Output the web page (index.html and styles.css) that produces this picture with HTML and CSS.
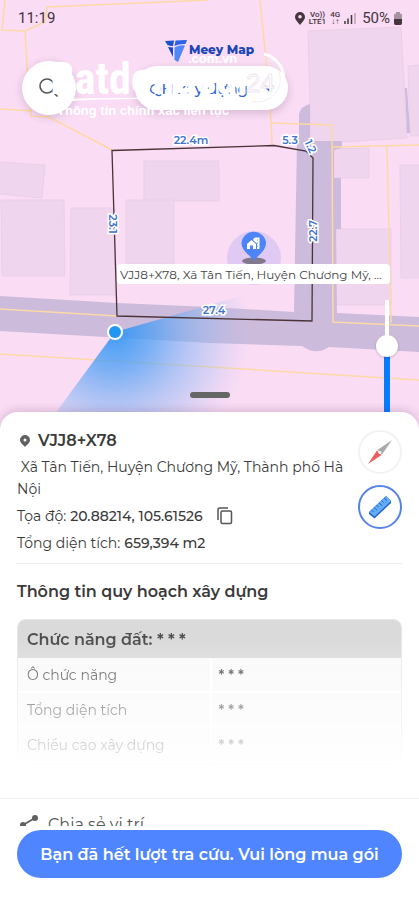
FILE: index.html
```
<!DOCTYPE html>
<html lang="vi">

<head>
    <meta charset="UTF-8" />
    <meta name="viewport" content="width=device-width, initial-scale=1" />
    <title>Meey Map</title>
    <link rel="stylesheet" href="styles.css">
</head>

<body>
    <section class="map">
        <svg class="map-canvas" viewBox="0 0 419 430" preserveAspectRatio="xMidYMin slice">
            <defs>
                <radialGradient id="beam" gradientUnits="userSpaceOnUse" cx="115" cy="332" r="135">
                    <stop offset="0" stop-color="#2b93f5" stop-opacity="0.9" />
                    <stop offset="0.3" stop-color="#4a9ff5" stop-opacity="0.7" />
                    <stop offset="0.65" stop-color="#7db4f5" stop-opacity="0.4" />
                    <stop offset="1" stop-color="#9dbef5" stop-opacity="0" />
                </radialGradient>
            </defs>
            <rect width="419" height="430" fill="#fadcf4" />

            <!-- buildings -->
            <g fill="#f0d5ee" stroke="#ebcfe9">
                <path d="M308 31L401 27L407 138L342 142H311Z" />
                <path d="M408 66L420 65V136H410Z" />
                <path d="M-1 162L45 165L42 198L-1 194Z" />
                <path d="M1 200H64L65 276H2Z" />
                <path d="M71 208H115V295H70Z" />
                <path d="M144 161H219V201H144Z" />
                <path d="M126 200H174V264H126Z" />
                <path d="M334 149L369 148V178H334Z" />
                <path d="M400 165H420V278H401Z" />
                <path d="M336 229H391V305H336Z" />
            </g>

            <!-- roads -->
            <g fill="#cdbbdb">
                <path d="M0 296L117 303L210 307L294 312L297 141H299V114Q301 106 310 104V141H342V148L334 150V178H341V229H336L337 313L419 317V352L329 347Q316 356 302 346L210 343L0 331Z" />
                <path d="M405 88H407L410 133H407Z" />
            </g>

            <g fill="none" stroke="#fcd9a6" stroke-width="1.5">
                <path d="M5 0L2 30L25 31L29 100L31 116L49 117L112 150" />
                <path d="M0 109L32 111M25 31L45 22L47 7L209 0" />
                <path d="M260 0L266 60L271 120L272 145" />
                <path d="M271 123L332 125L333 322L419 326" />
                <path d="M332 147L419 145M387 145L391 323" />
                <path d="M0 309L117 316M0 354L210 367L419 380" />
            </g>

            <path d="M115 332L290 282V430H43Z" fill="url(#beam)" />
            <path d="M112 150.500L274 145.500L306 151L313 158L312 321L117 316Z" fill="none" stroke="#4a3337" stroke-width="1.300" />

            <g class="edge-label">
                <text x="191" y="144">22.4m</text>
                <text x="290" y="144">5.3</text>
                <text transform="translate(307 148) rotate(65)">1.2</text>
                <text transform="translate(109 224) rotate(90)">23.1</text>
                <text transform="translate(317 231) rotate(-90)">22.7</text>
                <text x="214" y="314">27.4</text>
            </g>

            <circle cx="115" cy="332" r="8" fill="#fff" />
            <circle cx="115" cy="332" r="6" fill="#2196f3" />

            <!-- place marker -->
            <circle cx="254" cy="258" r="27" fill="#b9b0f5" fill-opacity="0.4" />
            <ellipse cx="254" cy="261" rx="12" ry="3.500" fill="#82788c" />
            <path d="M254 261C251 256 241.500 251 241.500 243A12.300 12.300 0 0 1 266 243C266 251 257 256 254 261Z" fill="#4d85f8" />
            <path d="M247 244L251.500 240L256 244V249H253V245.500H250V249H247ZM253 239.500L255 237.500H259.500V249H257V243.500L253 240Z" fill="#fff" />
            <path d="M257 240H258M257 243H258M257 246H258" stroke="#4d85f8" stroke-width="0.800" />
            <rect x="117" y="264" width="273" height="20" rx="4" fill="#fff" />
            <text class="place-label" x="120" y="279">VJJ8+X78, Xã Tân Tiến, Huyện Chương Mỹ, ...</text>
        </svg>

        <div class="status-bar">
            <time>11:19</time>
            <div class="status-icons">
                <svg width="10" height="13" viewBox="0 0 10 13"><path d="M5 0a5 5 0 0 0-5 5c0 3 3 5 5 8 2-3 5-5 5-8a5 5 0 0 0-5-5zm0 3a1.800 1.800 0 1 1 0 3.600a1.800 1.800 0 0 1 0-3.600z" fill="#44353f" fill-rule="evenodd" /></svg>
                <span class="network">Vo))<br>LTE1</span>
                <span class="network">4G<br>↓↑</span>
                <svg width="12" height="12" viewBox="0 0 12 12"><path d="M1 12V9M4 12V6.500M7.500 12V3" stroke="#44353f" stroke-width="1.500" /><path d="M11 12V1" stroke="#b9a4b5" stroke-width="1.500" /></svg>
                <span class="battery-level">50%</span>
                <svg width="8" height="13" viewBox="0 0 8 13"><path d="M0 3Q0 1.500 1.500 1.500H2V0H6V1.500H6.500Q8 1.500 8 3V7H0Z" fill="#a593a0" /><path d="M0 7H8V11Q8 13 6.500 13H1.500Q0 13 0 11Z" fill="#44353f" /></svg>
            </div>
        </div>

        <div class="brand">
            <svg width="22" height="23" viewBox="0 0 22 23">
                <path d="M0 1L9 .5L8 6Q4 6 2.500 5Z" fill="#1a4fd0" />
                <path d="M10.500 .5L22 0L20.500 4Q15 3.500 9.500 6Z" fill="#2a62e8" />
                <path d="M3 7L8 7.500V17Z" fill="#1546c4" />
                <path d="M9.500 7.500Q15 4.500 20 5.500L13 22L9.500 20Z" fill="#4f88fb" />
            </svg>
            <span>Meey Map</span>
        </div>

        <div class="search-row">
            <button class="search-button" type="button" aria-label="Tìm kiếm">
                <svg width="20" height="20" viewBox="0 0 20 20" fill="none" stroke="#555" stroke-width="1.600"><circle cx="8" cy="8" r="7" /><path d="M13 13L18.500 18.500" /></svg>
            </button>
            <label class="layer-picker">
                <select aria-label="Lớp quy hoạch">
                    <option>QH xây dựng</option>
                </select>
                <svg width="10" height="7" viewBox="0 0 10 7" fill="none" stroke="#2f66d5" stroke-width="2"><path d="M1 1L5 5L9 1" /></svg>
            </label>
        </div>

        <!-- watermark over the search row -->
        <svg class="watermark" width="240" height="74" viewBox="0 0 240 74" fill="#fff">
            <text class="wm-name" x="0" y="44">Batdongsan</text>
            <text class="wm-number" x="196" y="42">24</text>
            <text class="wm-domain" x="138" y="13">.com.vn</text>
            <text class="wm-slogan" x="7" y="65">Thông tin chính xác liên tục</text>
            <path d="M2 50Q60 46 162 49Q60 48 2 52Z" />
            <path d="M214 4A24 24 0 1 1 202 54" fill="none" stroke="#fff" stroke-width="3" />
            <path d="M214 8A21 21 0 1 1 202 51" fill="none" stroke="#f1e8f1" stroke-width="0.800" />
        </svg>

        <input class="opacity-slider" type="range" min="0" max="100" value="70" aria-label="Độ mờ lớp bản đồ">
        <div class="drag-handle"></div>
    </section>

    <main class="sheet">
        <div class="sheet-scroll">
            <section class="place">
                <div class="place-info">
                    <h1>
                        <svg width="10" height="12" viewBox="0 0 10 12"><path d="M5 0a5 5 0 0 0-5 5c0 3 3 4.500 5 7 2-2.500 5-4 5-7a5 5 0 0 0-5-5zm0 3.500a1.500 1.500 0 1 1 0 3a1.500 1.500 0 0 1 0-3z" fill="#616161" fill-rule="evenodd" /></svg>
                        VJJ8+X78
                    </h1>
                    <p class="address">&nbsp;Xã Tân Tiến, Huyện Chương Mỹ, Thành phố Hà Nội</p>
                    <p class="fact">Tọa độ: <b>20.88214, 105.61526</b>
                        <button class="copy-button" type="button" aria-label="Sao chép tọa độ">
                            <svg width="16" height="18" viewBox="0 0 16 18" fill="none" stroke="#555" stroke-width="1.500"><rect x="4" y="4" width="10.500" height="12.500" rx="1.500" /><path d="M1 13V2.500Q1 1 2.500 1H11" /></svg>
                        </button>
                    </p>
                    <p class="fact">Tổng diện tích: <b>659,394 m2</b></p>
                </div>
                <div class="tools">
                    <button class="tool" type="button" aria-label="La bàn">
                        <svg width="26" height="26" viewBox="0 0 26 26"><path d="M25 1L10.500 11L15 15.500Z" fill="#aaa" /><path d="M1 25L10 11.500L14.500 16Z" fill="#f45b5b" /><circle cx="12.800" cy="13.400" r="1.500" fill="#fff" /></svg>
                    </button>
                    <button class="tool active" type="button" aria-label="Đo đạc">
                        <svg width="24" height="24" viewBox="0 0 24 24"><path d="M1 17L18 1L23 6V8L6.500 23.500L1 19Z" fill="#1d62cf" /><path d="M1 17L18 1L23 6L6.500 21.500Z" fill="#64acf5" /><path d="M3.500 15L5.500 17M6 12.500L9 15M8.500 10L10.500 12M11 8L14 10.500M13.500 5.500L15.500 7.500M16 3L19 5.500" stroke="#1d62cf" /></svg>
                    </button>
                </div>
            </section>

            <section class="planning">
                <h2>Thông tin quy hoạch xây dựng</h2>
                <table>
                    <thead>
                        <tr><th colspan="2">Chức năng đất: * * *</th></tr>
                    </thead>
                    <tbody>
                        <tr><td>Ô chức năng</td><td>* * *</td></tr>
                        <tr><td>Tổng diện tích</td><td>* * *</td></tr>
                        <tr><td>Chiều cao xây dựng</td><td>* * *</td></tr>
                    </tbody>
                </table>
            </section>

            <a class="share" href="#">
                <svg width="18" height="20" viewBox="0 0 18 20" fill="#616161"><path d="M15 3L3 10L15 17" fill="none" stroke="#616161" stroke-width="1.800" /><circle cx="15" cy="3" r="3" /><circle cx="3" cy="10" r="3" /><circle cx="15" cy="17" r="3" /></svg>
                Chia sẻ vị trí
            </a>
        </div>

        <footer>
            <button class="buy-button" type="button">Bạn đã hết lượt tra cứu. Vui lòng mua gói</button>
        </footer>
    </main>
</body>

</html>
```
FILE: styles.css
```
body {
    display: flex;
    flex-direction: column;
    height: 100vh;
    margin: 0;
    font-family: Montserrat, Inter, "Open Sans", sans-serif;
    font-size: 15px;
    color: #3a3a3a;
    background: #fff;
}

button {
    font: inherit;
    border: none;
    padding: 0;
    cursor: pointer;
}

svg {
    flex: none;
}

h1,
h2,
p {
    margin: 0;
}

/* map */
.map {
    position: relative;
    flex: none;
    height: 430px;
    overflow: hidden;
}

.map-canvas {
    position: absolute;
    inset: 0;
    width: 100%;
    height: 100%;
}

.edge-label {
    font-size: 11px;
    font-weight: 600;
    text-anchor: middle;
    fill: #3f74cf;
    stroke: #fff;
    stroke-width: 3px;
    paint-order: stroke;
}

.place-label {
    font-size: 12px;
    fill: #444;
}

.status-bar {
    position: relative;
    display: flex;
    justify-content: space-between;
    align-items: center;
    height: 36px;
    padding: 0 17px 0 18px;
    font-family: Roboto, sans-serif;
    color: #44353f;
}

.status-icons {
    display: flex;
    align-items: center;
    gap: 4px;
}

.network {
    font-size: 8px;
    font-weight: 500;
    line-height: 7px;
    text-align: center;
}

.battery-level {
    margin-left: 2px;
}

.brand {
    position: relative;
    display: flex;
    justify-content: center;
    gap: 2px;
    height: 26px;
    padding-top: 4px;
    font-size: 12px;
    font-weight: 800;
    line-height: 20px;
    color: #1c46b8;
}

.search-row {
    position: relative;
    display: flex;
    align-items: center;
    justify-content: space-between;
    padding: 0 131px 0 22px;
    margin-top: -5px;
}

.search-button {
    display: flex;
    align-items: center;
    justify-content: center;
    width: 54px;
    height: 54px;
    border-radius: 50%;
    background: #fff;
    box-shadow: 0 2px 8px rgba(80, 40, 90, 0.2);
}

.layer-picker {
    display: flex;
    align-items: center;
    gap: 16px;
    height: 44px;
    padding: 0 14px;
    border-radius: 22px;
    background: #fff;
    box-shadow: 0 3px 8px rgba(80, 40, 90, 0.2);
}

.layer-picker select {
    appearance: none;
    border: none;
    background: none;
    padding: 0;
    font: inherit;
    font-weight: 500;
    color: #2f66d5;
}

.watermark {
    position: absolute;
    top: 50px;
    left: 50px;
}

.wm-name {
    font: bold 44px "Liberation Sans Narrow", "Roboto Condensed", Roboto, sans-serif;
}

.wm-number {
    font: 26px "Liberation Sans Narrow", "Liberation Sans", sans-serif;
    stroke: #f1e8f1;
}

.wm-domain {
    font: bold 13px "Liberation Sans", sans-serif;
}

.wm-slogan {
    font: bold 13px "Liberation Sans", sans-serif;
}

.opacity-slider {
    position: absolute;
    top: 300px;
    right: 21px;
    width: 22px;
    height: 140px;
    margin: 0;
    appearance: none;
    background: linear-gradient(#fff 48px, transparent 48px) center / 4px 100% no-repeat, linear-gradient(transparent 48px, #087cff 48px) center / 6px 100% no-repeat;
    writing-mode: vertical-lr;
    direction: rtl;
}

.opacity-slider::-webkit-slider-thumb {
    appearance: none;
    width: 22px;
    height: 22px;
    border-radius: 50%;
    background: #fff;
    box-shadow: 0 1px 3px rgba(0, 0, 0, 0.2);
}

.drag-handle {
    position: absolute;
    bottom: 32px;
    left: 50%;
    width: 40px;
    height: 6px;
    margin-left: -20px;
    border-radius: 3px;
    background: #666;
}

/* bottom sheet */
.sheet {
    position: relative;
    display: flex;
    flex: 1;
    flex-direction: column;
    min-height: 0;
    margin-top: -18px;
    border-radius: 18px 18px 0 0;
    background: #fff;
    box-shadow: 0 -2px 8px rgba(80, 40, 90, 0.2);
}

.sheet-scroll {
    flex: 1;
    min-height: 0;
    overflow-y: auto;
    scrollbar-width: none;
}

.place {
    display: flex;
    justify-content: space-between;
    margin: 0 17px;
    padding: 18px 0 9px;
    border-bottom: 1px solid #eee;
}

.place-info {
    flex: 1;
}

h1 {
    display: flex;
    align-items: center;
    gap: 8px;
    padding-left: 3px;
    font-size: 16px;
    font-weight: 600;
    line-height: 22px;
}

.address {
    padding-top: 4px;
    font-size: 14px;
    line-height: 22px;
}

.fact {
    display: flex;
    align-items: center;
    gap: 4px;
    padding-top: 5px;
    font-size: 14px;
    line-height: 22px;
}

.fact b {
    font-weight: 500;
}

.copy-button {
    display: flex;
    margin-left: 10px;
    background: none;
}

.tools {
    display: flex;
    flex-direction: column;
    gap: 11px;
}

.tool {
    display: flex;
    align-items: center;
    justify-content: center;
    box-sizing: border-box;
    width: 44px;
    height: 44px;
    border: 2px solid #f2f2f2;
    border-radius: 50%;
    background: #fff;
}

.tool.active {
    border-color: #5583e8;
}

.planning {
    padding: 17px 17px 34px;
}

h2 {
    padding-bottom: 16px;
    font-size: 16px;
    font-weight: 600;
    line-height: 22px;
}

table {
    width: 100%;
    border: 1px solid #e4e4e4;
    border-radius: 8px;
    border-spacing: 0;
    table-layout: fixed;
    overflow: hidden;
    mask-image: linear-gradient(rgba(0, 0, 0, 0.9) 20px, transparent 160px);
}

th,
td {
    box-sizing: border-box;
    height: 35px;
    padding: 0 9px;
    text-align: left;
}

th {
    height: 38px;
    font-size: 16px;
    font-weight: 600;
    background: #d6d6d6;
}

td {
    font-size: 14px;
    background: #f8f8f8;
    border-bottom: 2px solid #fff;
}

td + td {
    padding-left: 7px;
    font-weight: 600;
    border-left: 2px solid #fff;
}

.share {
    display: flex;
    align-items: center;
    gap: 10px;
    padding: 14px 20px;
    border-top: 1px solid #eee;
    font-size: 16px;
    line-height: 24px;
    color: #555;
    text-decoration: none;
}

footer {
    padding: 4px 17px 22px;
}

.buy-button {
    width: 100%;
    height: 48px;
    border-radius: 24px;
    font-size: 16px;
    font-weight: 600;
    color: #fff;
    background: #4f86ff;
}
```
